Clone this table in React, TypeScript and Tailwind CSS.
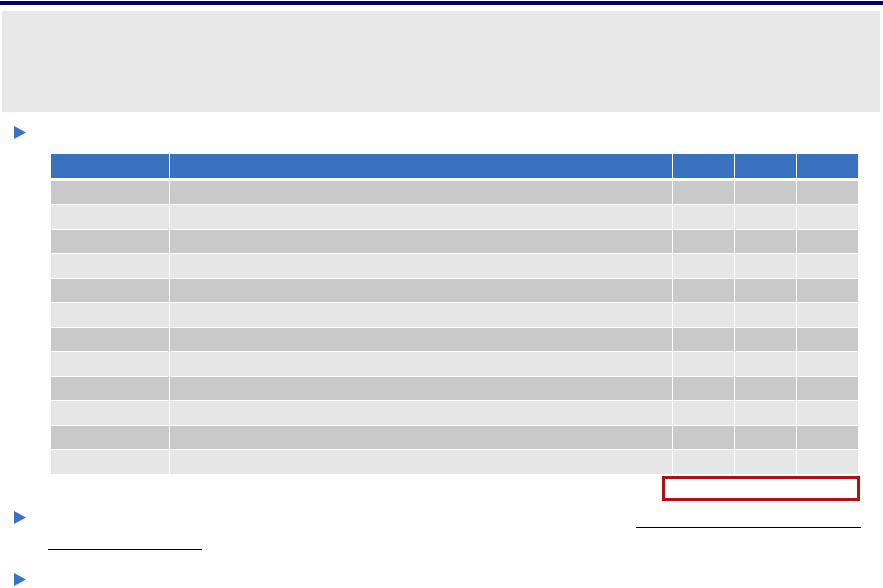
import React from "react";

function Tri({ className = "" }: { className?: string }) {
  return (
    <svg width="12" height="13" viewBox="0 0 12 13" className={className}>
      <polygon points="0,0 12,6.5 0,13" fill="#3a72c4" />
    </svg>
  );
}

export default function App() {
  const rows = Array.from({ length: 12 }, (_, i) => i);
  const cols = [0, 1, 2, 3, 4];
  return (
    <div className="w-[883px] h-[588px] bg-white overflow-hidden flex flex-col" style={{ fontFamily: '"Liberation Sans", Arial, sans-serif' }}>
      <div className="mt-[1px] h-[4px] w-full bg-[#000066]" />
      <div className="ml-[2px] mt-[6px] h-[101px] w-[878px] bg-[#e8e8e8]" />
      <div className="ml-[14px] mt-[14px] flex">
        <Tri />
      </div>
      <div className="ml-[51px] mt-[15px] w-[807px] flex flex-col">
        <div className="grid grid-cols-[118px_502px_61px_61px_61px] gap-x-[1px] h-[24px]">
          {cols.map((c) => (
            <div key={c} className="bg-[#3a72c0]" />
          ))}
        </div>
        <div className="h-[3px]" />
        <div className="flex flex-col gap-y-[1px]">
          {rows.map((r) => (
            <div
              key={r}
              className={`grid grid-cols-[118px_502px_61px_61px_61px] gap-x-[1px] ${r % 2 === 0 ? "h-[23px]" : "h-[24px]"}`}
            >
              {cols.map((c) => (
                <div key={c} className={r % 2 === 0 ? "bg-[#c9c9c9]" : "bg-[#e6e6e6]"} />
              ))}
            </div>
          ))}
        </div>
      </div>
      <div className="ml-[662px] mt-[2px] w-[198px] h-[25px] border-[3px] border-[#b00f16]" />
      <div className="relative mt-[10px] h-[17px]">
        <Tri className="ml-[14px]" />
        <div className="absolute left-[636px] top-[16px] w-[225px] h-[1px] bg-black" />
      </div>
      <div className="ml-[48px] mt-[21px] w-[154px] h-[1px] bg-black" />
      <div className="ml-[14px] mt-[23px] flex">
        <Tri />
      </div>
    </div>
  );
}
